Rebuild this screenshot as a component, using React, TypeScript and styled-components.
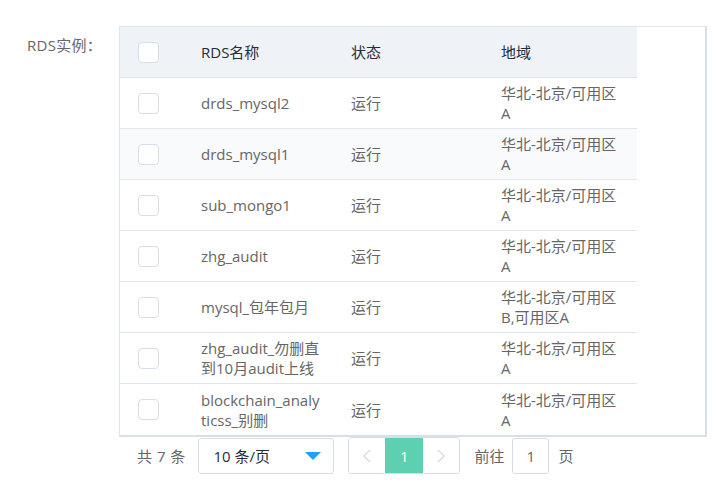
import React from "react";
import styled, { createGlobalStyle } from "styled-components";

const GlobalStyle = createGlobalStyle`
  html, body {
    margin: 0;
    padding: 0;
    background: #ffffff;
  }
  body {
    font-family: "Open Sans", "Noto Sans CJK SC", sans-serif;
    font-size: 15px;
    color: #666666;
  }
`;

const Page = styled.div`
  padding-top: 26px;
  width: 722px;
  height: 490px;
  box-sizing: border-box;
`;

const FormItem = styled.div`
  display: flex;
  align-items: flex-start;
`;

const Label = styled.div`
  width: 119px;
  box-sizing: border-box;
  padding-left: 27px;
  line-height: 38px;
  color: #666666;
  font-size: 15px;
  letter-spacing: 0.3px;
  white-space: nowrap;
`;

const Content = styled.div`
  display: flex;
  flex-direction: column;
`;

const TableWrap = styled.div`
  width: 588px;
  box-sizing: border-box;
  border: 1px solid #dfe6ec;
  border-right: 2px solid #d7dfe7;
  border-bottom: 2px solid #d7dfe7;
`;

const Table = styled.div`
  width: 517px;
  display: flex;
  flex-direction: column;
`;

const Row = styled.div<{ $head?: boolean; $hover?: boolean; $last?: boolean }>`
  display: grid;
  grid-template-columns: 69px 150px 150px 148px;
  height: 51px;
  box-sizing: border-box;
  border-bottom: ${({ $last }) => ($last ? "none" : "1px solid #dfe6ec")};
  background: ${({ $head, $hover }) =>
    $head ? "#eff2f7" : $hover ? "#f9fafc" : "#ffffff"};
  color: ${({ $head }) => ($head ? "#1f2d3d" : "#666666")};
`;

const Cell = styled.div<{ $padRight?: number }>`
  display: flex;
  align-items: center;
  padding: 0 ${({ $padRight }) => $padRight ?? 12}px 0 12px;
  line-height: 20px;
  word-break: break-all;
  min-width: 0;
`;

const CheckCell = styled.div`
  display: flex;
  align-items: center;
  padding-left: 18px;
`;

const Checkbox = styled.span`
  display: block;
  width: 21px;
  height: 21px;
  box-sizing: border-box;
  border: 1px solid #d6dee7;
  border-radius: 4px;
  background: #ffffff;
`;

const Pagination = styled.div`
  display: flex;
  align-items: center;
  height: 37px;
  padding-left: 18px;
  font-size: 15px;
  color: #666666;
`;

const Total = styled.span`
  margin-right: 13px;
  white-space: nowrap;
  word-spacing: 1px;
`;

const SizeSelect = styled.div`
  width: 136px;
  height: 36px;
  box-sizing: border-box;
  border: 1px solid #d6dee7;
  border-radius: 3px;
  display: flex;
  align-items: center;
  justify-content: space-between;
  padding: 0 12px 0 14px;
  color: #1f2d3d;
`;

const Pager = styled.div`
  margin-left: 14px;
  display: flex;
  height: 37px;
  box-sizing: border-box;
  border: 1px solid #d6dee7;
  border-radius: 3px;
  overflow: hidden;
`;

const PageBtn = styled.div<{ $active?: boolean }>`
  width: ${({ $active }) => ($active ? "38px" : "36px")};
  display: flex;
  align-items: center;
  justify-content: center;
  background: ${({ $active }) => ($active ? "#5dd0b2" : "#ffffff")};
  color: ${({ $active }) => ($active ? "#ffffff" : "#d1dbe5")};
`;

const Jumper = styled.div`
  margin-left: 14px;
  display: flex;
  align-items: center;
  gap: 8px;
`;

const JumpInput = styled.div`
  width: 37px;
  height: 36px;
  box-sizing: border-box;
  border: 1px solid #d6dee7;
  border-radius: 3px;
  display: flex;
  align-items: center;
  justify-content: center;
  color: #666666;
  margin-right: 1px;
`;

const Caret = () => (
  <svg width="16" height="8" viewBox="0 0 16 8">
    <path d="M0 0 L16 0 L8 8 Z" fill="#20a0ff" />
  </svg>
);

const Chevron = ({ dir }: { dir: "left" | "right" }) => (
  <svg width="10" height="14" viewBox="0 0 10 14">
    <path
      d={dir === "left" ? "M8 1 L2 7 L8 13" : "M2 1 L8 7 L2 13"}
      fill="none"
      stroke="#d8dee6"
      strokeWidth="1.6"
    />
  </svg>
);

const rows = [
  { name: "drds_mysql2", status: "运行", region: "华北-北京/可用区A" },
  { name: "drds_mysql1", status: "运行", region: "华北-北京/可用区A" },
  { name: "sub_mongo1", status: "运行", region: "华北-北京/可用区A" },
  { name: "zhg_audit", status: "运行", region: "华北-北京/可用区A" },
  { name: "mysql_包年包月", status: "运行", region: "华北-北京/可用区B,可用区A" },
  { name: "zhg_audit_勿删直到10月audit上线", status: "运行", region: "华北-北京/可用区A" },
  { name: "blockchain_analyticss_别删", status: "运行", region: "华北-北京/可用区A" },
];

const App: React.FC = () => {
  return (
    <Page>
      <GlobalStyle />
      <FormItem>
        <Label>RDS实例：</Label>
        <Content>
          <TableWrap>
            <Table>
              <Row $head>
                <CheckCell>
                  <Checkbox />
                </CheckCell>
                <Cell $padRight={16}>RDS名称</Cell>
                <Cell>状态</Cell>
                <Cell>地域</Cell>
              </Row>
              {rows.map((r, i) => (
                <Row key={i} $hover={i === 1} $last={i === rows.length - 1}>
                  <CheckCell>
                    <Checkbox />
                  </CheckCell>
                  <Cell $padRight={16}>{r.name}</Cell>
                  <Cell>{r.status}</Cell>
                  <Cell>{r.region}</Cell>
                </Row>
              ))}
            </Table>
          </TableWrap>
          <Pagination>
            <Total>共 7 条</Total>
            <SizeSelect>
              <span>10 条/页</span>
              <Caret />
            </SizeSelect>
            <Pager>
              <PageBtn>
                <Chevron dir="left" />
              </PageBtn>
              <PageBtn $active>1</PageBtn>
              <PageBtn>
                <Chevron dir="right" />
              </PageBtn>
            </Pager>
            <Jumper>
              <span>前往</span>
              <JumpInput>1</JumpInput>
              <span>页</span>
            </Jumper>
          </Pagination>
        </Content>
      </FormItem>
    </Page>
  );
};

export default App;
